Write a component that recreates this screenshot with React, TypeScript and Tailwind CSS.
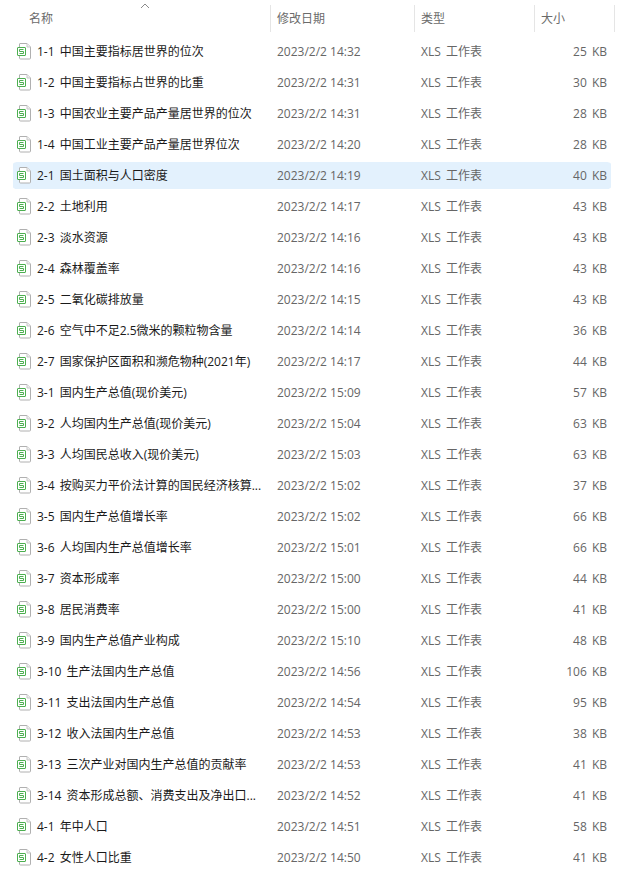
import React from 'react';

interface FileRow {
  name: string;
  date: string;
  size: string;
}

const files: FileRow[] = [
  { name: '1-1 中国主要指标居世界的位次', date: '2023/2/2 14:32', size: '25 KB' },
  { name: '1-2 中国主要指标占世界的比重', date: '2023/2/2 14:31', size: '30 KB' },
  { name: '1-3 中国农业主要产品产量居世界的位次', date: '2023/2/2 14:31', size: '28 KB' },
  { name: '1-4 中国工业主要产品产量居世界位次', date: '2023/2/2 14:20', size: '28 KB' },
  { name: '2-1 国土面积与人口密度', date: '2023/2/2 14:19', size: '40 KB' },
  { name: '2-2 土地利用', date: '2023/2/2 14:17', size: '43 KB' },
  { name: '2-3 淡水资源', date: '2023/2/2 14:16', size: '43 KB' },
  { name: '2-4 森林覆盖率', date: '2023/2/2 14:16', size: '43 KB' },
  { name: '2-5 二氧化碳排放量', date: '2023/2/2 14:15', size: '43 KB' },
  { name: '2-6 空气中不足2.5微米的颗粒物含量', date: '2023/2/2 14:14', size: '36 KB' },
  { name: '2-7 国家保护区面积和濒危物种(2021年)', date: '2023/2/2 14:17', size: '44 KB' },
  { name: '3-1 国内生产总值(现价美元)', date: '2023/2/2 15:09', size: '57 KB' },
  { name: '3-2 人均国内生产总值(现价美元)', date: '2023/2/2 15:04', size: '63 KB' },
  { name: '3-3 人均国民总收入(现价美元)', date: '2023/2/2 15:03', size: '63 KB' },
  { name: '3-4 按购买力平价法计算的国民经济核算...', date: '2023/2/2 15:02', size: '37 KB' },
  { name: '3-5 国内生产总值增长率', date: '2023/2/2 15:02', size: '66 KB' },
  { name: '3-6 人均国内生产总值增长率', date: '2023/2/2 15:01', size: '66 KB' },
  { name: '3-7 资本形成率', date: '2023/2/2 15:00', size: '44 KB' },
  { name: '3-8 居民消费率', date: '2023/2/2 15:00', size: '41 KB' },
  { name: '3-9 国内生产总值产业构成', date: '2023/2/2 15:10', size: '48 KB' },
  { name: '3-10 生产法国内生产总值', date: '2023/2/2 14:56', size: '106 KB' },
  { name: '3-11 支出法国内生产总值', date: '2023/2/2 14:54', size: '95 KB' },
  { name: '3-12 收入法国内生产总值', date: '2023/2/2 14:53', size: '38 KB' },
  { name: '3-13 三次产业对国内生产总值的贡献率', date: '2023/2/2 14:53', size: '41 KB' },
  { name: '3-14 资本形成总额、消费支出及净出口...', date: '2023/2/2 14:52', size: '41 KB' },
  { name: '4-1 年中人口', date: '2023/2/2 14:51', size: '58 KB' },
  { name: '4-2 女性人口比重', date: '2023/2/2 14:50', size: '41 KB' },
];

const XlsIcon: React.FC = () => (
  <svg width="16" height="17" viewBox="0 0 16 17" fill="none" className="shrink-0">
    <path d="M4 0.5H11L14.5 4V15Q14.5 16 13.5 16H4.5Q3.5 16 3.5 15V1Q3.5 0.5 4 0.5Z" fill="#fff" stroke="#b0b0b0" />
    <path d="M11 0.5V4H14.5" fill="#f0f0f0" stroke="#c8c8c8" />
    <rect x="1.5" y="4.5" width="8" height="8" rx="0.5" fill="#fff" stroke="#4caf50" />
    <path d="M7.5 6.5H3.5V8.5H7.5V10.5H3.5" stroke="#4caf50" />
  </svg>
);

const App: React.FC = () => {
  return (
    <div className="w-[634px] h-[886px] overflow-hidden bg-white pt-[5px] font-['Open_Sans','Noto_Sans_CJK_SC',sans-serif] text-[12px] [word-spacing:2px]">
      <div className="relative flex h-[27px] mb-[4px] ml-[14px] text-[#6b6b6b]">
        <span className="absolute left-[126px] top-[-2px]">
          <svg width="10" height="6" viewBox="0 0 10 6" fill="none">
            <path d="M1 5L5 1L9 5" stroke="#8a8a8a" />
          </svg>
        </span>
        <div className="w-[257px] pl-[15px] pt-[5px] border-r border-[#e5e5e5]">名称</div>
        <div className="w-[144px] pl-[6px] pt-[5px] border-r border-[#e5e5e5]">修改日期</div>
        <div className="w-[120px] pl-[6px] pt-[5px] border-r border-[#e5e5e5]">类型</div>
        <div className="w-[80px] pl-[6px] pt-[5px] border-r border-[#e5e5e5]">大小</div>
      </div>
      <div className="ml-[13px] w-[598px]">
        {files.map((file) => (
          <div
            key={file.name}
            className={`flex items-center h-[31px] border-y-2 border-white rounded-[4px] bg-clip-padding ${
              file.name.startsWith('2-1 ') ? 'bg-[#e3f1fd]' : ''
            }`}
          >
            <div className="w-[264px] flex items-center pl-[3px] text-[#1a1a1a]">
              <XlsIcon />
              <span className="ml-[5px] whitespace-nowrap">{file.name}</span>
            </div>
            <div className="w-[144px] text-[#666666] [word-spacing:0px]">{file.date}</div>
            <div className="w-[100px] text-[#666666]">XLS 工作表</div>
            <div className="w-[86px] text-right text-[#666666]">{file.size}</div>
          </div>
        ))}
      </div>
    </div>
  );
};

export default App;
